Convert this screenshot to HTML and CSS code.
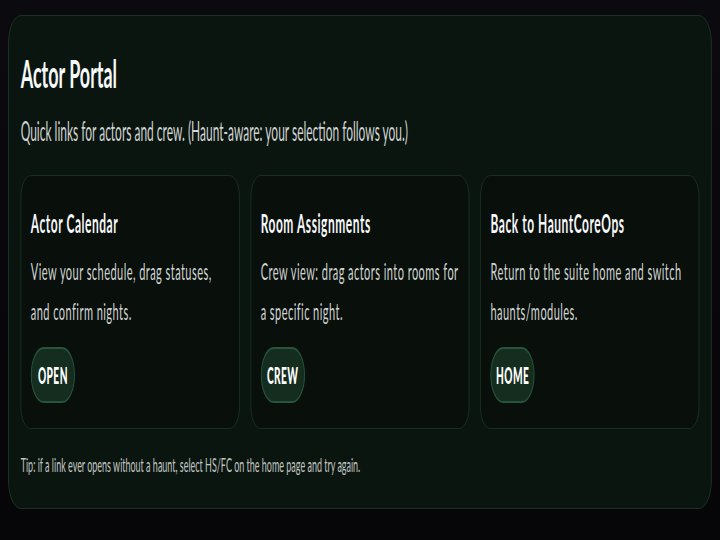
FILE: index.html
```html
<!DOCTYPE html>
<html>
  <head>
    <meta charset="utf-8">
    <title>Actor Portal</title>
    <meta name="viewport" content="width=device-width, initial-scale=1">
    <link rel="stylesheet" href="styles.css">
  </head>
  <body>
    <div class="stage">
      <section class="panel">
        <h1>Actor Portal</h1>
        <p class="lead">Quick links for actors and crew. (Haunt-aware: your selection follows you.)</p>

        <!-- Quick link cards -->
        <div class="grid">
          <div class="card">
            <h3>Actor Calendar</h3>
            <p>View your schedule, drag statuses, and confirm nights.</p>
            <a class="btn" href="#">OPEN</a>
          </div>
          <div class="card">
            <h3>Room Assignments</h3>
            <p>Crew view: drag actors into rooms for a specific night.</p>
            <a class="btn" href="#">CREW</a>
          </div>
          <div class="card">
            <h3>Back to HauntCoreOps</h3>
            <p>Return to the suite home and switch haunts/modules.</p>
            <a class="btn" href="#">HOME</a>
          </div>
        </div>

        <p class="tip">Tip: if a link ever opens without a haunt, select HS/FC on the home page and try again.</p>
      </section>
    </div>
  </body>
</html>
```

FILE: styles.css
```css
html,
body {
  margin: 0;
  height: 100%;
  overflow: hidden;
}

body {
  font-family: Lato, "Open Sans", sans-serif;
  background: linear-gradient(180deg, #0a0a0f 0%, #060609 100%);
  color: #f3f4f6;
}

.stage {
  width: 1565px;
  padding: 15px 18px;
  box-sizing: border-box;
  transform: scaleX(0.46);
  transform-origin: 0 0;
}

.panel {
  background: #0b150f;
  border: 1px solid #21402c;
  border-radius: 28px;
  padding: 34px 26px 31px;
}

h1 {
  margin: 0;
  font-size: 39px;
  line-height: 1.2;
  font-weight: 700;
  color: #f7f8fa;
}

.lead {
  margin: 19px 0 0;
  font-size: 26px;
  line-height: 1.2;
  color: #d0d4d2;
}

.grid {
  display: grid;
  grid-template-columns: repeat(3, 1fr);
  gap: 24px;
  margin-top: 28px;
}

.card {
  background: #090f0b;
  border: 1px solid #1d3826;
  border-radius: 22px;
  padding: 32px 16px 25px 21px;
}

.card h3 {
  margin: 0;
  font-size: 26px;
  line-height: 1.2;
  font-weight: 700;
  letter-spacing: 1.2px;
  color: #f7f8fa;
}

.card p {
  margin: 12px 0 0;
  font-size: 24px;
  line-height: 40px;
  letter-spacing: 0.95px;
  color: #d0d4d2;
}

.btn {
  display: inline-flex;
  align-items: center;
  justify-content: center;
  margin-top: 16px;
  height: 56px;
  width: 96px;
  box-sizing: border-box;
  border: 2px solid #27553c;
  border-radius: 999px;
  background: #142d1f;
  color: #ffffff;
  font-size: 22px;
  font-weight: 900;
  letter-spacing: 1px;
  text-decoration: none;
}

.tip {
  margin: 24px 0 0;
  font-size: 19.5px;
  line-height: 1.2;
  color: #c0c5c2;
}
```
